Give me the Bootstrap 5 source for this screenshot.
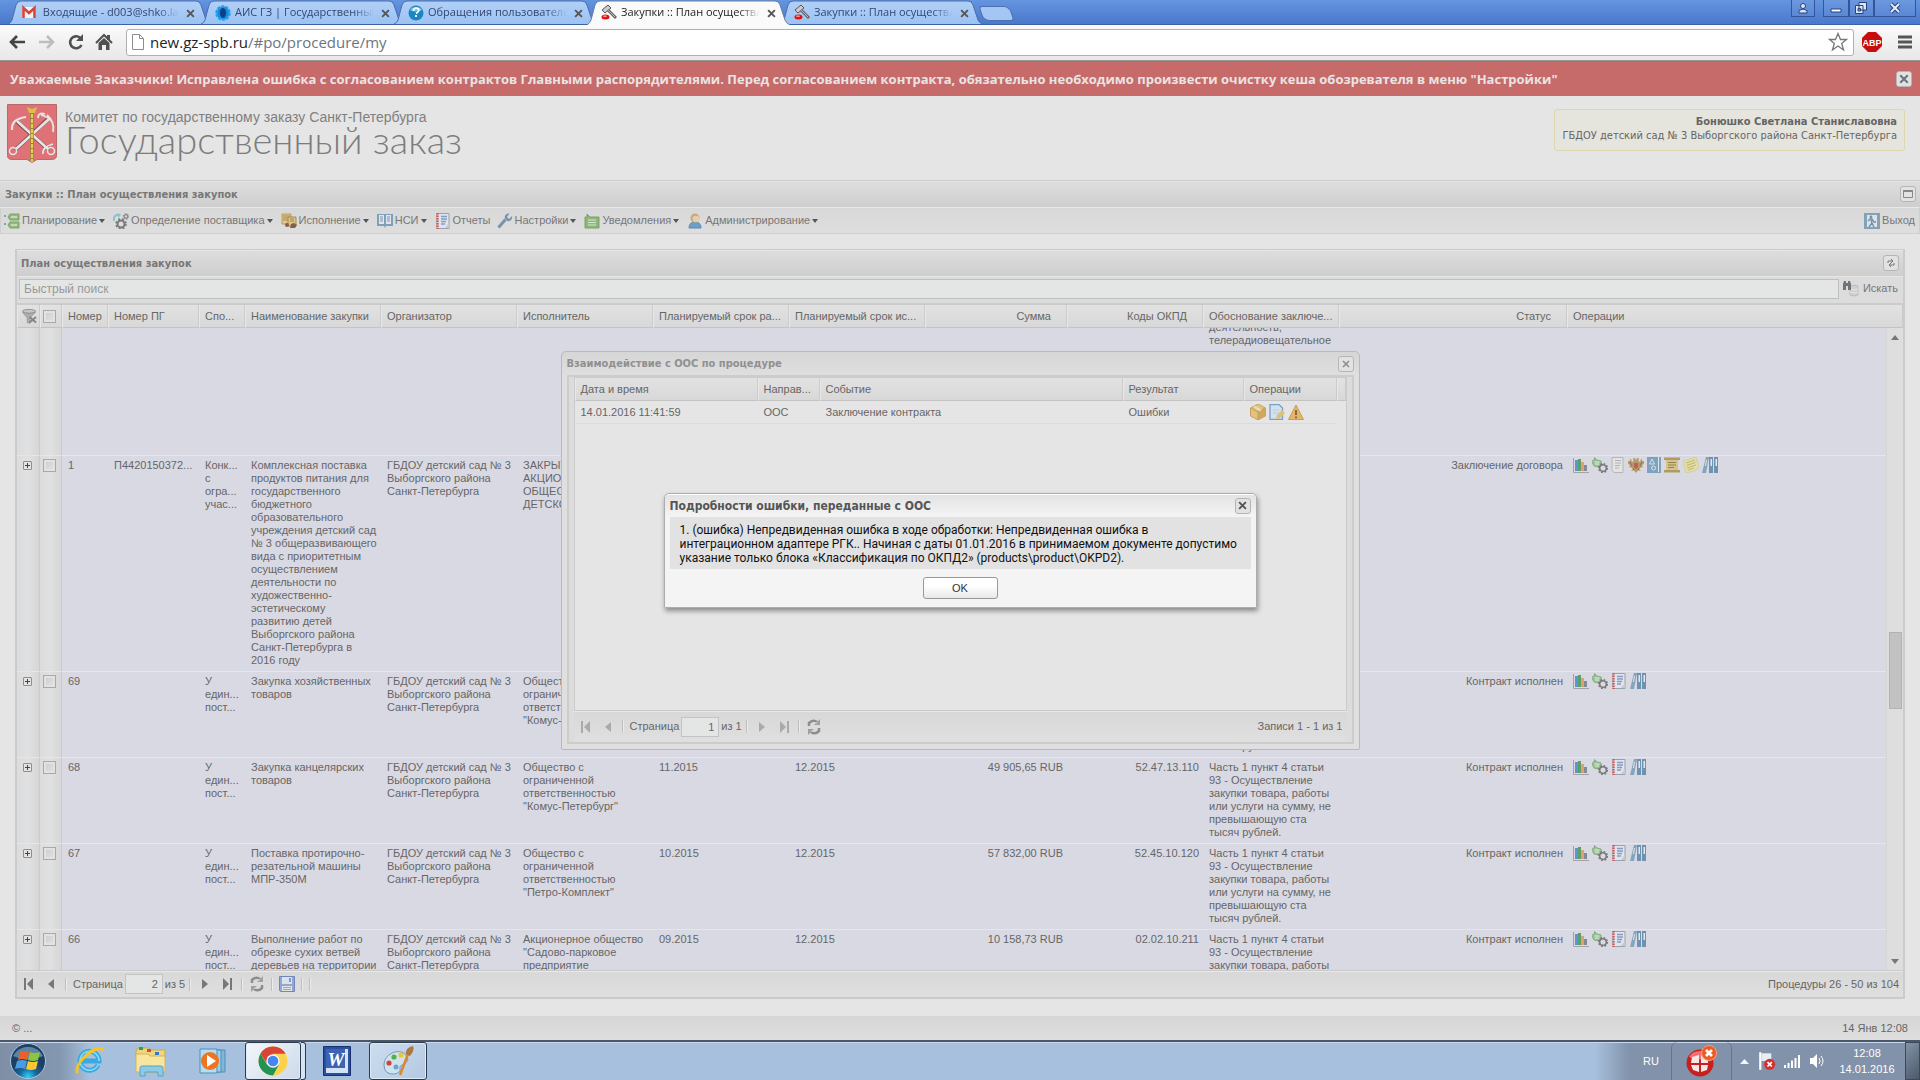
<!DOCTYPE html>
<html lang="ru">
<head>
<meta charset="utf-8">
<meta name="viewport" content="width=device-width, initial-scale=1">
<title>Закупки :: План осуществления закупок</title>
<link href="https://cdn.jsdelivr.net/npm/bootstrap@5.3.0/dist/css/bootstrap.min.css" rel="stylesheet">
<style>
:root{--edge:#cbcbcb;--bar:#dcdcdc;--page:#e5e5e5;--ink:#666;--tahoma:"DejaVu Sans Condensed","DejaVu Sans",sans-serif;--segoe:"Open Sans",sans-serif}
body{height:100vh;overflow:hidden;font:11px/13px "Liberation Sans",Arial,sans-serif;color:var(--ink);background:var(--page)}
svg{display:block;flex:none}
button,input{font:inherit;color:inherit}
button{padding:0;border:0;background:none}
a{color:inherit;text-decoration:none}
.i16{width:16px;height:16px}
/* browser window */
header,.notice,.site-head,.p-head,.menu-row,.search-row,.pager,.foot,.task,.rail,.lst-top{flex:none}
.tabstrip{height:25px;padding-left:8px;background:linear-gradient(#6495df,#4a78cc);border-bottom:1px solid #3c62a6}
.b-tab{width:203px;height:24px;margin-right:-10px;padding:2px 0 0 14px;font:11px/20px var(--segoe);color:#35476b;background:url("data:image/svg+xml,%3Csvg xmlns='http://www.w3.org/2000/svg' width='203' height='24'%3E%3Cdefs%3E%3ClinearGradient id='g' x2='0' y2='1'%3E%3Cstop stop-color='%23b1d0f8'/%3E%3Cstop offset='1' stop-color='%239cc2f3'/%3E%3C/linearGradient%3E%3C/defs%3E%3Cpath d='M0 24Q3 23 4 20L8 5Q9 1 13 1H188Q192 1 193 5L198 20Q199 23 203 24' fill='url(%23g)' stroke='%234c6ea8'/%3E%3C/svg%3E")}
.b-tab.on{z-index:2;height:25px;color:#222;background:url("data:image/svg+xml,%3Csvg xmlns='http://www.w3.org/2000/svg' width='203' height='25'%3E%3Cpath d='M0 25Q3 23 4 20L8 5Q9 1 13 1H188Q192 1 193 5L198 20Q199 23 203 25' fill='%23fafafa' stroke='%23667ea8'/%3E%3C/svg%3E")}
.b-tab .cap{width:139px;margin-left:4px;overflow:hidden;white-space:nowrap;-webkit-mask-image:linear-gradient(90deg,#000 85%,transparent)}
.b-tab button{margin-left:7px;color:#555}
.b-new{width:31px;height:15px;margin:6px 0 0 8px;border:1px solid #4c70b0;background:#a4c6f5;border-radius:3px 6px 3px 6px;transform:skewX(18deg)}
.winbtn{height:17px;border:1px solid #32559b;border-top:0;background:linear-gradient(#6c98e0,#5c87d4)}
.winbtn svg{margin:auto}
.navrow{height:36px;padding:4px 8px 5px 8px;background:linear-gradient(#fafafa,#e8e8e8);border-bottom:1px solid #9a9a9a}
.urlbox{height:27px;margin-left:12px;padding:0 5px;border:1px solid #b0b0b0;border-radius:3px;background:#fff;font:15px/24px var(--segoe)}
.urlbox a{margin-left:6px}
/* page */
.notice{height:35px;padding-left:10px;background:#c76a6a;color:#e8e4e4;font:bold 13px/34px "Open Sans",sans-serif;border-top:1px solid #b66}
.t-btn{width:16px;height:16px;border:1px solid #b5b5b5;border-radius:3px;background:#e2e2e2;display:grid;place-items:center}
.site-head{height:84px;padding:8px 15px 0 7px}
.logo-a{font-size:14px;line-height:16px;color:#808080;margin-top:5px}
.logo-b{font:300 38px/28px Lato,sans-serif;color:#7c7c7c}
.user-box{height:42px;margin-top:5px;padding:5px 7px;border:1px solid #dcd7ae;border-radius:3px;background:#e5e4dd;font:11px/14px var(--tahoma);text-align:right}
.p-head{height:27px;padding:0 4px;border-top:1px solid var(--edge);box-shadow:inset 0 1px #e6e6e6;background:linear-gradient(#dedede,#cecece);font:bold 11px/25px var(--tahoma);color:#777}
.menu-row{height:27px;padding:0 4px 0 3px;border:1px solid #cfcfcf;border-top-color:#e8e8e8;background:linear-gradient(#d8d8d8,#dedede);color:#777}
.menu-row button{display:flex;align-items:center;margin-right:6px}
.menu-row svg{margin-right:2px}
.drop::after{content:"";margin:0 1px 0 2px;border:4px solid transparent;border-top-color:#555;border-bottom:0;border-left-width:3px;border-right-width:3px}
.drop{padding-right:1px}
.g-panel{flex:1 1 0;margin:15px 15px 17px;border:2px solid var(--edge);border-top:0;min-height:0}
.search-row{height:29px;padding:2px 5px 5px 2px;border-top:1px solid #e6e6e6;border-bottom:2px solid var(--edge);background:#dcdcdc;color:#777}
.search-row input{height:20px;padding:0 4px;border:1px solid #bfbfbf;background:#e4e6e5;font-size:12px;color:#888}
.search-row input::placeholder{color:#999}
.lst{width:100%;table-layout:fixed;border-collapse:separate;border-spacing:0}
.lst th{height:23px;padding:0 4px 0 5px;font-weight:400;white-space:nowrap;overflow:hidden;border-left:1px solid #e8e8e8;border-right:1px solid #cbcbcb;border-bottom:1px solid #c3c3c3;background:linear-gradient(#e2e2e2,#d8d8d8)}
.lst td{padding:3px 4px 4px 6px;vertical-align:top;border-bottom:1px solid #e6e5e8}
.plan td{background:#d9d9e3}
.plan td:nth-child(-n+2){background:linear-gradient(90deg,#dcdcdc,#e0e1e2 50%,#d6d6d6);border-right:1px solid #cbcbcb;padding:3px}
.lst th.n{text-align:right;padding-right:15px}
.lst th.cb{padding:0 0 0 2px}
.lst td.n{text-align:right}
.tick{appearance:none;display:block;width:13px;height:13px;margin:0;border:1px solid #a9a9a9;background:linear-gradient(135deg,#c9cbcd,#e4e4e4);box-shadow:inset 0 0 0 2px #e2e2e2}
.plus{width:9px;height:9px;margin:2px 0 0 3px;display:grid;place-items:center;border:1px solid #8f8f8f;border-radius:1px;background:#e3e3e3}
.ops{display:flex;gap:3px;margin:-2px 0 -4px}
.tall{height:138px}
.rail{width:17px;background:#dedede;border-left:1px solid #d6d6d6;padding:7px 0 6px}
.rail .up,.rail .dn{border:4px solid transparent;width:8px;height:0}
.rail .up{border-bottom:5px solid #777;border-top:0}.rail .dn{border-top:5px solid #777;border-bottom:0}
.thumb{width:13px;height:77px;background:#c2c2c2;border:1px solid #b2b2b2}
.rail .below{height:250px}
.pager{height:27px;padding:0 4px;border-top:1px solid #c9c9c9;box-shadow:inset 0 1px #e9e9e9;background:linear-gradient(#d8d8d8,#dfdfdf)}
.pager .pi{width:16px;margin-right:6px;color:#777}
.pager .sp{width:2px;height:13px;border-left:1px solid #bfbfbf;border-right:1px solid #ebebeb;margin:0 6px 0 0}
.pager input{width:38px;height:20px;margin:0 2px;padding:0 4px;text-align:right;border:1px solid #c3c3c3;background:#e4e5e5}
.flip{transform:scaleX(-1)}
.foot{height:24px;padding:0 12px;background:linear-gradient(#d6d6d6,#dedede)}
/* windows */
.veil{position:absolute;inset:0;display:flex;align-items:center;justify-content:center}
.w1{width:799px;height:399px;padding:0 5px 5px;border:1px solid #b9b9bd;border-radius:5px 5px 2px 2px;background:linear-gradient(#d6d6d6,#dfdfdf 24px)}
.w1-h{height:23px;font:bold 11px/22px var(--tahoma);color:#909090}
.w1-in{border:2px solid #cccccc;padding:0 5px;background:#dcdcdc}
.w1-g{border:1px solid #cbcbcb;border-bottom:1px solid #c9c9c9;background:#e5e5e5}
.w1 .pager{height:31px;border-top:0}
.w1 .pager .pi{color:#aaa}
.ev td{height:23px;vertical-align:middle;padding-top:0;padding-bottom:0;border-bottom-color:#dbdbdb}
.w2{width:593px;height:115px;padding:0 5px;border:1px solid #adadad;border-radius:5px 5px 1px 1px;background:linear-gradient(#e2e2e2,#f4f4f4 22px);box-shadow:1px 3px 5px rgba(0,0,0,.4),inset 0 1px #fff}
.w2-h{height:23px;font:bold 12px/22px var(--tahoma);color:#555}
.w2-t{height:52px;padding:6px 6px 4px 10px;background:#e2e2e2;color:#111;font:12px/14px Roboto,sans-serif}
.ok{width:75px;height:22px;margin:8px auto 0;border:1px solid #999;border-radius:3px;background:linear-gradient(#fff 40%,#e8e8e8);color:#333;display:block}
/* taskbar */
.task{height:40px;border-top:2px solid #4c586a;box-shadow:inset 0 1px #c9d8ea;background:linear-gradient(90deg,#7f8fa6 0,#8497b0 60px,#a7c0dd 90px,#a7c0dd calc(100% - 325px),#8192aa calc(100% - 290px));color:#fff}
.tk{width:62px;display:grid;place-items:center}
.tk.start{width:58px}
.tk.run{width:58px;margin:0 1px;border:1px solid #2e3b4c;border-radius:3px;box-shadow:inset 0 0 0 1px #dfe9f4;background:linear-gradient(135deg,#cdddef,#b3c9e2)}
.tk.now{width:56px;margin-right:0;background:linear-gradient(135deg,#f4f7fb,#cbd9ea)}
.tk.guard{width:61px}
.stack{width:5px;border:1px solid #2e3b4c;border-left:0;border-radius:0 3px 3px 0;background:#d7e3f0}
.clock{width:76px;text-align:center;line-height:16px}
.peek{width:15px;border:1px solid #3c495c;background:linear-gradient(135deg,#8392a6,#4c596b)}
</style>
<script src="https://cdn.jsdelivr.net/npm/bootstrap@5.3.0/dist/js/bootstrap.bundle.min.js"></script>
</head>
<body class="d-flex flex-column">
<svg width="0" height="0" class="position-absolute">
<defs>
<symbol id="x" viewBox="0 0 8 8"><path d="M1 1l6 6M7 1l-6 6" stroke="currentColor" stroke-width="1.7"/></symbol>
<symbol id="gavel" viewBox="0 0 16 16"><path d="M1 6l6-5 3 3-6 5z" fill="#ccc" stroke="#555"/><path d="M7 6l8 8" stroke="#666" stroke-width="3"/><path d="M7 6l7 7" stroke="#bbb"/><ellipse cx="4.500" cy="13" rx="4" ry="2.500" fill="#d11"/><ellipse cx="4" cy="12.200" rx="2" ry="1" fill="#f88"/></symbol>
<symbol id="plan" viewBox="0 0 16 16"><path d="M0 2h2v2H0zM0 10h2v2H0z" fill="#7ba7bd"/><path d="M6 1h9v6H6L4 4zM6 9h9v6H6l-2-3z" fill="#93b97f" stroke="#7da36c"/><path d="M7 4h6M7 12h6" stroke="#d5e3cc" stroke-width="1.500"/></symbol>
<symbol id="gears" viewBox="0 0 16 16"><path d="M1 8C0 4 3 1 6 2" fill="none" stroke="#8dbdd0" stroke-width="2"/><path d="M5 0l3 2-3 3z" fill="#8dbdd0"/><circle cx="8" cy="11" r="3.500" fill="none" stroke="#7a7a7a" stroke-width="2"/><circle cx="8" cy="11" r="5" fill="none" stroke="#7a7a7a" stroke-width="1.500" stroke-dasharray="2 2"/><circle cx="13" cy="3.500" r="1.800" fill="none" stroke="#858585" stroke-width="1.300"/><circle cx="13" cy="3.500" r="2.900" fill="none" stroke="#858585" stroke-dasharray="1.500 1.500"/></symbol>
<symbol id="exec" viewBox="0 0 16 16"><path d="M1 1h9v10H1z" fill="#e0c98f" stroke="#b89c60"/><path d="M2 3h7M2 5h7M2 7h5" stroke="#a88850"/><path d="M7 4h8v9H7z" fill="#dcc386" stroke="#a78b50"/><path d="M9 6h4M9 8h4" stroke="#a88850"/><circle cx="6" cy="12" r="2" fill="#86604a"/><path d="M9 15l1-4 3-1 3 2-2 3z" fill="#86604a"/></symbol>
<symbol id="book" viewBox="0 0 16 16"><path d="M0 1h16v12h-7l-1 2-1-2H0z" fill="#7da0bb"/><path d="M2 2h5v9H2zM9 2h5v9H9z" fill="#e0e6ea"/><path d="M3 4h3M3 6h3M3 8h3M10 4h3M10 6h3M10 8h3" stroke="#8e8eb4"/></symbol>
<symbol id="report" viewBox="0 0 16 16"><path d="M2 .5h12v15H2z" fill="#dfe3ea" stroke="#9aa2ad"/><path d="M2.500 0v16" stroke="#c46060" stroke-width="2.500" stroke-dasharray="1.500 1"/><path d="M6 3.500h6M6 6h6M6 8.500h5M6 11h4" stroke="#869cc6" stroke-width="1.400"/><path d="M10 15l4-5v5z" fill="#c8c8c8"/></symbol>
<symbol id="wrench" viewBox="0 0 16 16"><path d="M1.500 14.500l7-8" stroke="#7992ac" stroke-width="3"/><path d="M15 3l-3 3-2-2 2.500-3.500C9 0 7 3 8 5.500L10.500 8C13 9 16 6.500 15 3z" fill="#7992ac"/></symbol>
<symbol id="notes" viewBox="0 0 16 16"><path d="M1 4h2V1l3 3h9v11H1z" fill="#8fb679" stroke="#7ba268"/><path d="M4 7h8M4 9.500h8M4 12h8" stroke="#d9e6d1" stroke-width="1.200"/></symbol>
<symbol id="person" viewBox="0 0 16 16"><path d="M2 15q0-6 6-6t6 6z" fill="#6d9fcb" stroke="#5c88b0"/><circle cx="8" cy="5" r="4.500" fill="#c8ab7c"/><circle cx="9" cy="6" r="3.300" fill="#e3ceb4"/></symbol>
<symbol id="exit" viewBox="0 0 16 16"><path d="M0 0h16v16H0z" fill="#83a2b8"/><path d="M3 2h10v12H3z" fill="#dde3e6"/><circle cx="7" cy="4" r="1.400" fill="#6e90a8"/><path d="M4 8l2-2h2l2 3h2M7 7l1 3-3 4M8 10l2 4" stroke="#6e90a8" stroke-width="1.400" fill="none"/></symbol>
<symbol id="filter" viewBox="0 0 16 16"><ellipse cx="7.500" cy="3" rx="7" ry="2" fill="#c6c6c6" stroke="#8d8d8d"/><path d="M.5 4l5 6v5l3 1v-6l6-6q-7 3-14 0z" fill="#adadad" stroke="#8d8d8d" stroke-width=".6"/><path d="M8 9l7 6M15 9l-7 6" stroke="#858585" stroke-width="2"/></symbol>
<symbol id="binoc" viewBox="0 0 16 16"><path d="M7 5q4-2 8 0v9q-4 2-8 0z" fill="#cfcfcf" stroke="#bdbdbd"/><path d="M7 8q4 2 8 0M7 11q4 2 8 0" fill="none" stroke="#e6e6e6"/><path d="M0 3l1-3h2v2h2V0h2l1 3v6H5V5H3v4H0z" fill="#6f7478"/></symbol>
<symbol id="bars" viewBox="0 0 16 16"><path d="M.5 1v14.500H16" fill="none" stroke="#a2a2a8"/><path d="M2 3h3v11H2z" fill="#6490d8"/><path d="M5 2h3v12H5z" fill="#59a265"/><path d="M8 5h3v9H8z" fill="#e0a077"/><path d="M11 8h3v6h-3z" fill="#858b93"/></symbol>
<symbol id="tag" viewBox="0 0 16 16"><path d="M1 3h1.500V.500L5 3l4 1 .500 3-2.500 3-5-1L.5 6z" fill="#9cc597" stroke="#84ad80"/><path d="M2.500 5h5M3 7h4" stroke="#d9e9d8"/><circle cx="11" cy="11" r="3.300" fill="none" stroke="#777" stroke-width="1.500"/><circle cx="11" cy="11" r="4.500" fill="none" stroke="#777" stroke-width="1.200" stroke-dasharray="1.800 1.730"/></symbol>
<symbol id="page" viewBox="0 0 14 16"><path d="M1 .5h11v15H3L1 13z" fill="#e2e3e3" stroke="#b4b6ba"/><path d="M4 3.500h6M4 6h6M4 8.500h5M4 11h4" stroke="#b0b2b6"/></symbol>
<symbol id="eagle" viewBox="0 0 16 16"><path d="M8 3L7 1 5 1.500 5.500 4 4 5 3 2 2 2v2L0 4v3l2 1-1 2 3 1 1 1-2 2 3-.5L8 16l2-2.500 3 .5-2-2 1-1 3-1-1-2 2-1V4l-2 0V2h-1l-1 3-1.500-1L11 1.500 9 1z" fill="#b89a68"/><path d="M6 6h4v4l-2 2-2-2z" fill="#b8615a"/><path d="M2 5l2 4M14 5l-2 4M6 13l-1-2M10 13l1-2" stroke="#8a6f4c"/></symbol>
<symbol id="ab" viewBox="0 0 14 16"><path d="M0 0h14v16H0z" fill="#7fa3bf"/><path d="M11.500 0v15" stroke="#dfe6ea"/><path d="M2.500 7L5 2l2.500 5z" fill="none" stroke="#d5e0e8"/><circle cx="6.500" cy="11" r="2" fill="none" stroke="#d5e0e8"/></symbol>
<symbol id="scroll" viewBox="0 0 16 16"><path d="M2 2h12v12H2z" fill="#d7c387"/><path d="M0 .5h16v2.500H0zM0 13h16v2.500H0z" fill="#b09c62"/><path d="M4 5.500h8M4 8h8M4 10.500h6" stroke="#93824f"/></symbol>
<symbol id="sticky" viewBox="0 0 16 16"><path d="M0 4l13-4 3 11-5 3-8 2z" fill="#e3dea2" stroke="#cfc98c" stroke-width=".7"/><path d="M3 6l9-3M3.500 8.500l9-3M4 11l9-3M5 13l6-2" stroke="#bdb67a"/></symbol>
<symbol id="binders" viewBox="0 0 16 16"><path d="M4 0h3L4 16H0z" fill="#84a5bd"/><path d="M7 0h4v16H7zM12 0h4v16h-4z" fill="#6e93b0"/><path d="M8.500 2h1.500v7H8.500zM13.500 2H15v7h-1.500zM4 3h1L4 9H3z" fill="#e1e8ee"/></symbol>
<symbol id="box" viewBox="0 0 16 16"><path d="M8 0l7.500 4v8L8 16 .5 12V4z" fill="#e1c283" stroke="#c7a260"/><path d="M1 4l7 4 7-4M8 8v8" stroke="#c29a55" fill="none"/><path d="M8 8l7-4v8l-7 4z" fill="#cfa75f"/><path d="M4 2.500l7 4" stroke="#f0e0b8" stroke-width="2"/></symbol>
<symbol id="docedit" viewBox="0 0 16 16"><path d="M1 .5h9L13.500 4v11.500H1z" fill="#d3e0ee" stroke="#7b9fcb" stroke-width="1.300"/><path d="M4 6h6M4 9h5" stroke="#b9cde3"/><path d="M7 15l1-4 5-5 3 3-5 5z" fill="#dfc077"/></symbol>
<symbol id="warn" viewBox="0 0 16 16"><path d="M8 1l7.500 14.500H.5z" fill="#e6b56a" stroke="#cf9c51"/><path d="M8 6v5M8 12.500v1.700" stroke="#7d6238" stroke-width="1.800"/></symbol>
<symbol id="first" viewBox="0 0 16 16"><path d="M4 2v12" stroke="currentColor" stroke-width="2"/><path d="M12 2v12L6 8z" fill="currentColor"/></symbol>
<symbol id="prev" viewBox="0 0 16 16"><path d="M11 3v10L5 8z" fill="currentColor"/></symbol>
<symbol id="refresh" viewBox="0 0 16 16"><path d="M3 7V4q4-4 8-1M13 9v3q-4 4-8 1" fill="none" stroke="#8c8c8c" stroke-width="2.500"/><path d="M8 6h6V0zM8 10H2v6z" fill="#a0a0a0"/><path d="M4 6q3-4 7-2M12 10q-3 4-7 2" fill="none" stroke="#d6d6d6"/></symbol>
<symbol id="disk" viewBox="0 0 16 16"><path d="M.5.5h15v15h-14l-1-1z" fill="#91a7d6" stroke="#7286b8"/><path d="M3 1h10v7H3z" fill="#dbe2ec"/><path d="M10 2h2v4h-2z" fill="#8496c4"/><path d="M3 10h10v5H3z" fill="#dfe5df"/><path d="M4 11.500h8M4 13.500h8" stroke="#98b68e"/></symbol>
</defs></svg>

<header>
<div class="tabstrip d-flex">
<div class="b-tab d-flex position-relative"><svg width="14" height="20" viewBox="0 0 14 20"><path d="M0 5h14v11H0z" fill="#f2f2f2"/><path d="M1.500 16V6L7 11l5.500-5v10" fill="none" stroke="#d8453a" stroke-width="2.600"/></svg><span class="cap">&nbsp;Входящие - d003@shko.lan</span><button aria-label="Закрыть"><svg width="9" height="9"><use href="#x"/></svg></button></div>
<div class="b-tab d-flex position-relative"><svg width="16" height="20" viewBox="0 0 16 20"><circle cx="8" cy="11" r="6.500" fill="#1787dc" stroke="#19a5ee" stroke-width="2.500" stroke-dasharray="3 1"/><ellipse cx="8" cy="11" rx="3" ry="5" fill="#113e86"/></svg><span class="cap">АИС ГЗ | Государственный з</span><button aria-label="Закрыть"><svg width="9" height="9"><use href="#x"/></svg></button></div>
<div class="b-tab d-flex position-relative"><svg width="16" height="20" viewBox="0 0 16 20"><circle cx="8" cy="11" r="7.500" fill="#1a87c0"/><path d="M2 8a6.500 5 0 0112 0q-6 3-12 0" fill="#7cc7ea"/><path d="M5.500 9q0-3 2.700-3t2.600 2.400q0 1.300-2.800 3.100M8 13v2" stroke="#fff" stroke-width="1.700" fill="none"/></svg><span class="cap">Обращения пользователей</span><button aria-label="Закрыть"><svg width="9" height="9"><use href="#x"/></svg></button></div>
<div class="b-tab on d-flex position-relative"><svg width="16" height="20"><use href="#gavel" y="2" height="16"/></svg><span class="cap">Закупки :: План осуществления</span><button aria-label="Закрыть"><svg width="9" height="9"><use href="#x"/></svg></button></div>
<div class="b-tab d-flex position-relative"><svg width="16" height="20"><use href="#gavel" y="2" height="16"/></svg><span class="cap">Закупки :: План осуществления</span><button aria-label="Закрыть"><svg width="9" height="9"><use href="#x"/></svg></button></div>
<button class="b-new" aria-label="Новая вкладка"></button>
<div class="ms-auto d-flex pe-1">
<button class="winbtn me-2 px-1" aria-label="Профиль"><svg width="14" height="12" viewBox="-1 0 14 12"><circle cx="6" cy="4" r="2.500" fill="#dce8fa" stroke="#26427c"/><path d="M2 11V8.500q4-3 8 0V11z" fill="#dce8fa" stroke="#26427c"/></svg></button>
<button class="winbtn px-1" aria-label="Свернуть"><svg width="16" height="12" viewBox="-2 0 16 12"><path d="M1 7h10v3H1z" fill="#fff" stroke="#26427c"/></svg></button>
<button class="winbtn px-1" aria-label="Развернуть"><svg width="15" height="12" viewBox="-1 0 15 12"><path d="M4 .5h7.500V8H4zM.5 3.500H8v8H.5z" fill="#dce8fa" stroke="#26427c"/><path d="M3 6.500h2.500V9H3z" fill="#6c98e0" stroke="#26427c"/></svg></button>
<button class="winbtn px-2" aria-label="Закрыть окно"><svg width="24" height="12" viewBox="-6 0 24 12"><path d="M2 2l8 8M10 2l-8 8" stroke="#26427c" stroke-width="4"/><path d="M2 2l8 8M10 2l-8 8" stroke="#e4edfb" stroke-width="2"/></svg></button>
</div>
</div>
<div class="navrow d-flex align-items-center">
<button aria-label="Назад"><svg width="18" height="18" viewBox="0 0 18 18"><path d="M17 9H4M9 3L3 9l6 6" fill="none" stroke="#444" stroke-width="2.700"/></svg></button>
<button aria-label="Вперёд" class="ms-2 ps-1"><svg width="18" height="18" viewBox="0 0 18 18"><path d="M1 9h13M9 3l6 6-6 6" fill="none" stroke="#bdbdbd" stroke-width="2.500"/></svg></button>
<button aria-label="Обновить" class="ms-2 ps-1"><svg width="18" height="18" viewBox="0 0 18 18"><path d="M13.500 12A6 6 0 1112 4.700" fill="none" stroke="#505050" stroke-width="2.600"/><path d="M15 1v7H8z" fill="#505050"/></svg></button>
<button aria-label="Домой" class="ms-2"><svg width="20" height="18" viewBox="0 0 20 18"><path d="M2 10l8-8 8 8" fill="none" stroke="#505050" stroke-width="2"/><path d="M13 2h3v5h-3zM4.500 10L10 5l5.500 5v7H12v-5H8v5H4.500z" fill="#505050"/></svg></button>
<div class="urlbox flex-grow-1 d-flex align-items-center"><svg width="12" height="16" viewBox="0 0 12 16"><path d="M.5.500h7l4 4v11H.5zM7.500.500v4h4" fill="#fff" stroke="#8d8d8d"/></svg><a href="#" class="text-dark">new.gz-spb.ru<span class="text-secondary">/#po/procedure/my</span></a><svg class="ms-auto" width="20" height="20" viewBox="0 0 20 20"><path d="M10 1.500l2.500 6h6l-4.800 4 1.800 6.500-5.500-4-5.500 4 1.800-6.500-4.800-4h6z" fill="#fff" stroke="#777" stroke-width="1.300"/></svg></div>
<svg class="ms-2" width="20" height="20" viewBox="0 0 20 20"><path d="M6 0h8l6 6v8l-6 6H6l-6-6V6z" fill="#c70d0d"/><text x="10" y="13.500" text-anchor="middle" font-family="Liberation Sans" font-size="9" font-weight="700" fill="#fff">ABP</text></svg>
<button class="ms-3" aria-label="Меню"><svg width="14" height="14" viewBox="0 0 14 14"><path d="M0 2h14M0 7h14M0 12h14" stroke="#555" stroke-width="3"/></svg></button>
</div>
</header>

<main class="flex-grow-1 d-flex flex-column position-relative overflow-hidden">
<div class="notice d-flex align-items-center justify-content-between pe-2"><span>Уважаемые Заказчики! Исправлена ошибка с согласованием контрактов Главными распорядителями. Перед согласованием контракта, обязательно необходимо произвести очистку кеша обозревателя в меню "Настройки"</span><button class="t-btn text-secondary" aria-label="Закрыть сообщение"><svg width="10" height="10"><use href="#x"/></svg></button></div>
<div class="site-head d-flex align-items-start">
<svg width="50" height="59" viewBox="0 0 50 59"><path d="M.5.500h49v51q0 4-5 4H30l-5 3-5-3H5q-4.500 0-4.500-4z" fill="#de7276" stroke="#b66a6a"/><g fill="none" stroke="#8b5255" stroke-width="4"><path d="M8 46L42 14M42 46L9 17"/></g><g fill="none" stroke="#e6e6e6" stroke-width="2.600"><path d="M9 45L42 15M41 45L10 17"/><path d="M5 26q-1-11 14-13" stroke-width="2.200"/><path d="M46 28q2-10-6-17M31 14q0-6 7-4M46 19q-4-6-12-8M36 50q-1-7 10-10" stroke-width="1.800"/><circle cx="6" cy="47" r="3.500" stroke-width="1.500"/><circle cx="44" cy="47" r="3.500" stroke-width="1.500"/></g><path d="M25 5v53" stroke="#9c8232" stroke-width="3.600"/><path d="M25 5v53" stroke="#e3ce52" stroke-width="2.200" stroke-dasharray="4 1"/><path d="M20 3l5 2 5-2-2 6h-6z" fill="#d9c14a"/></svg>
<div class="ms-2"><div class="logo-a">Комитет по государственному заказу Санкт-Петербурга</div><div class="logo-b">Государственный заказ</div></div>
<div class="user-box ms-auto"><b>Бонюшко Светлана Станиславовна</b><br>ГБДОУ детский сад № 3 Выборгского района Санкт-Петербурга</div>
</div>
<div class="p-head d-flex justify-content-between align-items-center"><span>&#8202;Закупки :: План осуществления закупок</span><button class="t-btn" aria-label="Свернуть панель"><svg width="10" height="8" viewBox="0 0 10 8"><path d="M.5 1h9v6.500h-9z" fill="none" stroke="#888"/><path d="M0 1h10" stroke="#888" stroke-width="2"/></svg></button></div>
<nav class="menu-row d-flex align-items-center">
<button class="drop"><svg class="i16"><use href="#plan"/></svg>Планирование</button>
<button class="drop"><svg class="i16"><use href="#gears"/></svg>Определение поставщика</button>
<button class="drop"><svg class="i16"><use href="#exec"/></svg>Исполнение</button>
<button class="drop"><svg class="i16"><use href="#book"/></svg>НСИ</button>
<button><svg class="i16"><use href="#report"/></svg>Отчеты</button>
<button class="drop"><svg class="i16"><use href="#wrench"/></svg>Настройки</button>
<button class="drop"><svg class="i16"><use href="#notes"/></svg>Уведомления</button>
<button class="drop"><svg class="i16"><use href="#person"/></svg>Администрирование</button>
<button class="ms-auto me-0"><svg class="i16"><use href="#exit"/></svg>Выход</button>
</nav>

<section class="g-panel d-flex flex-column">
<div class="p-head d-flex justify-content-between align-items-center"><span>План осуществления закупок</span><button class="t-btn" aria-label="Обновить"><svg width="8" height="10" viewBox="0 0 8 10"><path d="M1 5V3h5M4 1l2 2-2 2M7 5v2H2M4 5L2 7l2 2" fill="none" stroke="#777"/></svg></button></div>
<div class="search-row d-flex align-items-center"><input type="text" class="flex-grow-1" placeholder="Быстрый поиск" aria-label="Быстрый поиск"><button class="d-flex align-items-center ms-1"><svg class="i16 me-1"><use href="#binoc"/></svg>Искать</button></div>
<table class="lst lst-top">
<colgroup><col style="width:23px"><col style="width:22px"><col style="width:46px"><col style="width:91px"><col style="width:46px"><col style="width:136px"><col style="width:136px"><col style="width:136px"><col style="width:136px"><col style="width:136px"><col style="width:142px"><col style="width:136px"><col style="width:136px"><col style="width:228px"><col></colgroup>
<thead><tr><th class="px-1"><svg width="15" height="16"><use href="#filter"/></svg></th><th class="cb"><input type="checkbox" class="tick" aria-label="Выбрать все"></th><th>Номер</th><th>Номер ПГ</th><th>Спо...</th><th>Наименование закупки</th><th>Организатор</th><th>Исполнитель</th><th>Планируемый срок ра...</th><th>Планируемый срок ис...</th><th class="n">Сумма</th><th class="n">Коды ОКПД</th><th>Обоснование заключе...</th><th class="n">Статус</th><th>Операции</th></tr></thead>
</table>
<div class="d-flex flex-grow-1 overflow-hidden">
<div id="rows" class="flex-grow-1 overflow-hidden">
<table class="lst plan">
<colgroup><col style="width:23px"><col style="width:22px"><col style="width:46px"><col style="width:91px"><col style="width:46px"><col style="width:136px"><col style="width:136px"><col style="width:136px"><col style="width:136px"><col style="width:136px"><col style="width:142px"><col style="width:136px"><col style="width:136px"><col style="width:228px"><col></colgroup>
<tbody>
<tr class="tall"><td></td><td></td><td></td><td></td><td></td><td></td><td></td><td></td><td></td><td></td><td></td><td></td><td>деятельность, телерадиовещательное</td><td></td><td></td></tr>
<tr><td><button class="plus" aria-label="Развернуть"><svg width="5" height="5" viewBox="0 0 5 5"><path d="M2.500 0v5M0 2.500h5" stroke="#444"/></svg></button></td><td><input type="checkbox" class="tick" aria-label="Выбрать 1"></td><td>1</td><td class="text-nowrap">П4420150372...</td><td class="text-nowrap">Конк...<br>с<br>огра...<br>учас...</td><td>Комплексная поставка продуктов питания для государственного бюджетного образовательного учреждения детский сад №&nbsp;3&nbsp;общеразвивающего вида с приоритетным осуществлением деятельности по художественно-эстетическому развитию детей Выборгского района Санкт-Петербурга в 2016 году</td><td>ГБДОУ детский сад № 3 Выборгского района Санкт-Петербурга</td><td>ЗАКРЫТОЕ<br>АКЦИОНЕРНОЕ<br>ОБЩЕСТВО<br>ДЕТСКОЕ</td><td></td><td></td><td></td><td></td><td></td><td class="n">Заключение договора</td><td><div class="ops"><svg class="i16"><use href="#bars"/></svg><svg class="i16"><use href="#tag"/></svg><svg width="14" height="16"><use href="#page"/></svg><svg class="i16"><use href="#eagle"/></svg><svg width="14" height="16"><use href="#ab"/></svg><svg class="i16"><use href="#scroll"/></svg><svg class="i16"><use href="#sticky"/></svg><svg class="i16"><use href="#binders"/></svg></div></td></tr>
<tr><td><button class="plus" aria-label="Развернуть"><svg width="5" height="5" viewBox="0 0 5 5"><path d="M2.500 0v5M0 2.500h5" stroke="#444"/></svg></button></td><td><input type="checkbox" class="tick" aria-label="Выбрать 69"></td><td>69</td><td></td><td class="text-nowrap">У<br>един...<br>пост...</td><td>Закупка хозяйственных товаров</td><td>ГБДОУ детский сад № 3 Выборгского района Санкт-Петербурга</td><td>Общество с ограниченной ответственностью "Комус-Петербург"</td><td></td><td></td><td></td><td></td><td>Часть 1 пункт 4 статьи 93 - Осуществление закупки товара, работы или услуги на сумму, не превышающую ста тысяч рублей.</td><td class="n">Контракт исполнен</td><td><div class="ops"><svg class="i16"><use href="#bars"/></svg><svg class="i16"><use href="#tag"/></svg><svg class="i16"><use href="#report"/></svg><svg class="i16"><use href="#binders"/></svg></div></td></tr>
<tr><td><button class="plus" aria-label="Развернуть"><svg width="5" height="5" viewBox="0 0 5 5"><path d="M2.500 0v5M0 2.500h5" stroke="#444"/></svg></button></td><td><input type="checkbox" class="tick" aria-label="Выбрать 68"></td><td>68</td><td></td><td class="text-nowrap">У<br>един...<br>пост...</td><td>Закупка канцелярских товаров</td><td>ГБДОУ детский сад № 3 Выборгского района Санкт-Петербурга</td><td>Общество с ограниченной ответственностью "Комус-Петербург"</td><td>11.2015</td><td>12.2015</td><td class="n">49 905,65 RUB</td><td class="n">52.47.13.110</td><td>Часть 1 пункт 4 статьи 93 - Осуществление закупки товара, работы или услуги на сумму, не превышающую ста тысяч рублей.</td><td class="n">Контракт исполнен</td><td><div class="ops"><svg class="i16"><use href="#bars"/></svg><svg class="i16"><use href="#tag"/></svg><svg class="i16"><use href="#report"/></svg><svg class="i16"><use href="#binders"/></svg></div></td></tr>
<tr><td><button class="plus" aria-label="Развернуть"><svg width="5" height="5" viewBox="0 0 5 5"><path d="M2.500 0v5M0 2.500h5" stroke="#444"/></svg></button></td><td><input type="checkbox" class="tick" aria-label="Выбрать 67"></td><td>67</td><td></td><td class="text-nowrap">У<br>един...<br>пост...</td><td>Поставка протирочно-резательной машины МПР-350М</td><td>ГБДОУ детский сад № 3 Выборгского района Санкт-Петербурга</td><td>Общество с ограниченной ответственностью "Петро-Комплект"</td><td>10.2015</td><td>12.2015</td><td class="n">57 832,00 RUB</td><td class="n">52.45.10.120</td><td>Часть 1 пункт 4 статьи 93 - Осуществление закупки товара, работы или услуги на сумму, не превышающую ста тысяч рублей.</td><td class="n">Контракт исполнен</td><td><div class="ops"><svg class="i16"><use href="#bars"/></svg><svg class="i16"><use href="#tag"/></svg><svg class="i16"><use href="#report"/></svg><svg class="i16"><use href="#binders"/></svg></div></td></tr>
<tr><td><button class="plus" aria-label="Развернуть"><svg width="5" height="5" viewBox="0 0 5 5"><path d="M2.500 0v5M0 2.500h5" stroke="#444"/></svg></button></td><td><input type="checkbox" class="tick" aria-label="Выбрать 66"></td><td>66</td><td></td><td class="text-nowrap">У<br>един...<br>пост...</td><td>Выполнение работ по обрезке сухих ветвей деревьев на территории</td><td>ГБДОУ детский сад № 3 Выборгского района Санкт-Петербурга</td><td>Акционерное общество "Садово-парковое предприятие</td><td>09.2015</td><td>12.2015</td><td class="n">10 158,73 RUB</td><td class="n">02.02.10.211</td><td>Часть 1 пункт 4 статьи 93 - Осуществление закупки товара, работы<br><br><br></td><td class="n">Контракт исполнен</td><td><div class="ops"><svg class="i16"><use href="#bars"/></svg><svg class="i16"><use href="#tag"/></svg><svg class="i16"><use href="#report"/></svg><svg class="i16"><use href="#binders"/></svg></div></td></tr>
</tbody></table>
</div>
<div class="rail d-flex flex-column align-items-center"><div class="up"></div><div class="flex-grow-1"></div><div class="thumb"></div><div class="below"></div><div class="dn"></div></div>
</div>
<div class="pager d-flex align-items-center">
<button class="pi" aria-label="Первая"><svg class="i16"><use href="#first"/></svg></button><button class="pi" aria-label="Предыдущая"><svg class="i16"><use href="#prev"/></svg></button><span class="sp"></span><label for="pg">Страница</label><input id="pg" value="2"><span class="me-1">из 5</span><span class="sp"></span><button class="pi" aria-label="Следующая"><svg class="i16 flip"><use href="#prev"/></svg></button><button class="pi" aria-label="Последняя"><svg class="i16 flip"><use href="#first"/></svg></button><span class="sp"></span><button class="pi" aria-label="Обновить"><svg class="i16"><use href="#refresh"/></svg></button><span class="sp"></span><button class="pi" aria-label="Сохранить"><svg class="i16"><use href="#disk"/></svg></button><span class="sp"></span><span class="sp"></span><span class="ms-auto">Процедуры 26 - 50 из 104</span></div>
</section>
<footer class="foot d-flex align-items-center justify-content-between"><span>© ...</span><span>14 Янв 12:08</span></footer>

<div class="veil">
<section class="w1 d-flex flex-column">
<div class="w1-h d-flex justify-content-between align-items-center"><span>Взаимодействие с ООС по процедуре</span><button class="t-btn" aria-label="Закрыть"><svg width="8" height="8"><use href="#x"/></svg></button></div>
<div class="w1-in flex-grow-1 d-flex flex-column">
<div class="w1-g flex-grow-1">
<table class="lst"><colgroup><col style="width:183px"><col style="width:62px"><col style="width:303px"><col style="width:121px"><col style="width:93px"><col></colgroup>
<thead><tr><th>Дата и время</th><th>Направ...</th><th>Событие</th><th>Результат</th><th>Операции</th><th></th></tr></thead>
<tbody class="ev"><tr><td>14.01.2016 11:41:59</td><td>ООС</td><td>Заключение контракта</td><td>Ошибки</td><td><div class="ops m-0"><svg class="i16"><use href="#box"/></svg><svg class="i16"><use href="#docedit"/></svg><svg class="i16"><use href="#warn"/></svg></div></td><td class="border-0"></td></tr></tbody></table>
</div>
<div class="pager d-flex align-items-center">
<button class="pi" aria-label="Первая"><svg class="i16"><use href="#first"/></svg></button><button class="pi" aria-label="Предыдущая"><svg class="i16"><use href="#prev"/></svg></button><span class="sp"></span><label for="pg2">Страница</label><input id="pg2" value="1"><span class="me-1">из 1</span><span class="sp"></span><button class="pi" aria-label="Следующая"><svg class="i16 flip"><use href="#prev"/></svg></button><button class="pi" aria-label="Последняя"><svg class="i16 flip"><use href="#first"/></svg></button><span class="sp"></span><button class="pi" aria-label="Обновить"><svg class="i16"><use href="#refresh"/></svg></button><span class="ms-auto">Записи 1 - 1 из 1</span></div>
</div>
</section>
</div>
<div class="veil">
<section class="w2" role="dialog" aria-labelledby="dt">
<div class="w2-h d-flex justify-content-between align-items-center"><span id="dt">Подробности ошибки, переданные с ООС</span><button class="t-btn" aria-label="Закрыть"><svg width="9" height="9"><use href="#x"/></svg></button></div>
<div class="w2-t">1. (ошибка) Непредвиденная ошибка в ходе обработки: Непредвиденная ошибка в<br>интеграционном адаптере РГК.. Начиная с даты 01.01.2016 в принимаемом документе допустимо<br>указание только блока «Классификация по ОКПД2» (products\product\OKPD2).</div>
<button class="ok">OK</button>
</section>
</div>
</main>

<div class="task d-flex">
<button class="tk start" aria-label="Пуск"><svg width="38" height="38" viewBox="0 0 38 38"><defs><radialGradient id="orb" cy=".95"><stop stop-color="#28d4f6"/><stop offset=".5" stop-color="#1b659d"/><stop offset="1" stop-color="#1c3f66"/></radialGradient></defs><circle cx="18" cy="19" r="17.500" fill="url(#orb)" stroke="#a9c9dd"/><path d="M3 14a16 14 0 0130 0q-15 7-30 0" fill="#8fb0cc" opacity=".6"/><path d="M10 10q4-2 9 0l-2 8q-4-2-9 0z" fill="#e8632c"/><path d="M20 10q4 2 10 0l-2 8q-5 2-10 0z" fill="#8cc63f"/><path d="M7 19q5-2 10 0l-2 8q-5-2-10 0z" fill="#4a9be0"/><path d="M18 19q4 2 10 0l-2 8q-5 2-10 0z" fill="#fbc62e"/></svg></button>
<button class="tk" aria-label="Internet Explorer"><svg width="32" height="32" viewBox="0 0 32 32"><path d="M25 20A9.500 9.500 0 1126 16H9" fill="none" stroke="#38a9e2" stroke-width="5"/><path d="M25 20A9.500 9.500 0 1126 16" fill="none" stroke="#91dcfa" stroke-width="1.500"/><path d="M4 29C-3 23 18-3 30 3q1 1 0 4-2-4-9 0C11 12 3 23 6 27z" fill="#f4c52b"/></svg></button>
<button class="tk" aria-label="Проводник"><svg width="32" height="32" viewBox="0 0 32 32"><path d="M1 6l2-3h11l2 2h14v8H1z" fill="#edd67f" stroke="#c9a94a"/><path d="M4 2h4v3H4z" fill="#2fa34b"/><path d="M12 4h4v3h-4z" fill="#d44"/><path d="M20 7h4v3h-4z" fill="#37c"/><path d="M1 9h12l2 2h15v16H1z" fill="#f6e6a0" stroke="#d1b45b"/><path d="M5 31v-8q0-2 2-2h19q2 0 2 2v8h-5v-4H10v4z" fill="#8ccbe8" stroke="#5e9fc4"/></svg></button>
<button class="tk" aria-label="Проигрыватель"><svg width="28" height="28" viewBox="0 0 28 28"><path d="M9 3h17v22H9z" fill="#7fb9da" stroke="#4d8fb8"/><path d="M5 3h17v22H5z" fill="#9fd0e8" stroke="#4d8fb8"/><path d="M1 2h17v24H1z" fill="#b5dcef" stroke="#4d8fb8"/><circle cx="11" cy="14" r="9" fill="#ee7421"/><path d="M8 8l9 6-9 6z" fill="#fff"/></svg></button>
<button class="tk run now" aria-label="Chrome"><svg width="30" height="30" viewBox="0 0 30 30"><circle cx="15" cy="15" r="14.500" fill="#fcd24c"/><path d="M2.400 7.800A14.500 14.500 0 0127.600 7.800H15L10 19z" fill="#da4437"/><path d="M2.400 7.800L9 18.500l12 0-6 11A14.500 14.500 0 012.400 7.800z" fill="#219455"/><circle cx="15" cy="15" r="6.700" fill="#f5f5f5"/><circle cx="15" cy="15" r="5.300" fill="#4586f2"/></svg></button>
<span class="stack"></span>
<button class="tk" aria-label="Word"><svg width="28" height="30" viewBox="0 0 28 30"><path d="M.5.500h27v29H.5z" fill="#2b4fa0" stroke="#17306e"/><path d="M3 3h22v24H3z" fill="#d5e2f5"/><path d="M3 3h19v19H3z" fill="#3d63b4"/><text x="13" y="20" text-anchor="middle" font-family="Liberation Serif" font-size="19" font-style="italic" font-weight="700" fill="#fff">W</text></svg></button>
<button class="tk run" aria-label="Paint"><svg width="32" height="32" viewBox="0 0 32 32"><path d="M2 20C2 9 16 3 23 9q7 7-3 11-3 1-2 4t-5 5Q2 30 2 20z" fill="#cfe3ef" stroke="#6f9bb8"/><circle cx="7" cy="18" r="2.600" fill="#d8403b"/><circle cx="12" cy="12" r="2.600" fill="#57b045"/><circle cx="19" cy="10" r="2.600" fill="#f1c530"/><circle cx="14" cy="22" r="2.500" fill="#6da2cc"/><path d="M26 9L18 30" stroke="#e0862f" stroke-width="2.600"/><path d="M24 9q-1-6 7-8 2 5-3 10z" fill="#ad7746"/></svg></button>
<div class="ms-auto d-flex align-items-center">
<span class="pe-2 me-1">RU</span>
<button class="tk guard h-100 border-start border-end border-secondary rounded-top" aria-label="Защита"><svg width="32" height="34" viewBox="0 0 32 34"><circle cx="14" cy="19" r="13.500" fill="#c81f1f"/><path d="M3 13a12 10 0 0122 0q-10 5-22 0" fill="#f07070"/><path d="M6 13l7-2v8H5zM15 11l7 2v6h-7zM5 21h8v7l-6-2zM15 21h7l-1 5-6 2z" fill="#f6e6e6"/><circle cx="23" cy="9" r="7.500" fill="#ef5a22" stroke="#f3a17d"/><path d="M20 6l6 6M26 6l-6 6" stroke="#fff" stroke-width="2.600"/></svg></button>
<svg class="ms-2" width="9" height="6" viewBox="0 0 9 6"><path d="M0 6l4.500-5L9 6z" fill="#f4f6f9"/></svg>
<svg class="ms-2" width="22" height="20" viewBox="0 0 20 18"><path d="M3 1v16" stroke="#fff" stroke-width="2"/><path d="M4 2h9v7H4z" fill="#e8edf4"/><circle cx="11.500" cy="12" r="5" fill="#d3302c"/><path d="M9.500 10l4 4M13.500 10l-4 4" stroke="#fff" stroke-width="1.600"/></svg>
<svg class="ms-1" width="18" height="16" viewBox="0 0 18 16"><path d="M1 12h2v3H1zM4.500 10h2v5h-2zM8 7.500h2V15H8zM11.500 5h2v10h-2zM15 2h2v13h-2z" fill="#fff"/></svg>
<svg class="ms-2" width="16" height="16" viewBox="0 0 16 16"><path d="M1 5h3l4-4v14l-4-4H1z" fill="#fff"/><path d="M10 5q2 3 0 6M12 3q4 5 0 10" fill="none" stroke="#fff"/></svg>
<div class="clock ms-1">12:08<br>14.01.2016</div>
<button class="peek h-100" aria-label="Показать рабочий стол"></button>
</div>
</div>
<script>document.getElementById('rows').scrollTop=10;</script>
</body>
</html>
